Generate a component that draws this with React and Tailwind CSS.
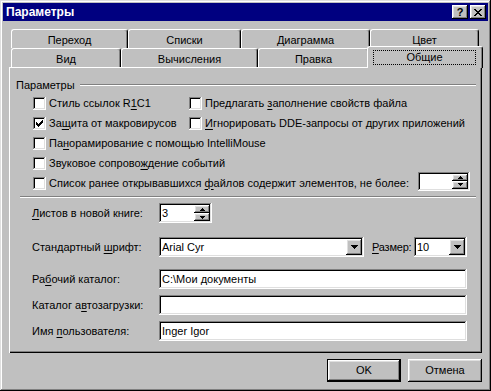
import React from "react";

const raised =
  "shadow-[inset_-1px_-1px_#000,inset_1px_1px_#fff,inset_-2px_-2px_#808080,inset_2px_2px_#dfdfdf]";
const sunken =
  "shadow-[inset_-1px_-1px_#fff,inset_1px_1px_#808080,inset_-2px_-2px_#dfdfdf,inset_2px_2px_#000]";

function U({ children }) {
  return <span className="underline underline-offset-[2px]">{children}</span>;
}

function Check({ checked }) {
  return (
    <div className={`w-[13px] h-[13px] bg-white shrink-0 flex items-center justify-center ${sunken}`}>
      {checked && (
        <svg width="7" height="7" viewBox="0 0 7 7" shapeRendering="crispEdges">
          <path d="M6 0h1v1h-1z M5 1h2v1h-2z M0 2h1v1h-1z M4 2h3v1h-3z M0 3h2v1h-2z M3 3h3v1h-3z M0 4h5v1h-5z M1 5h3v1h-3z M2 6h1v1h-1z" />
        </svg>
      )}
    </div>
  );
}

function CheckItem({ checked, children, className = "" }) {
  return (
    <div className={`flex items-center ${className}`}>
      <Check checked={checked} />
      <span className="ml-[3px] whitespace-nowrap">{children}</span>
    </div>
  );
}

function Arrow({ dir }) {
  return (
    <svg width="5" height="3" viewBox="0 0 5 3" shapeRendering="crispEdges">
      {dir === "up" ? (
        <path d="M2 0h1v1h-1z M1 1h3v1h-3z M0 2h5v1h-5z" />
      ) : (
        <path d="M0 0h5v1h-5z M1 1h3v1h-3z M2 2h1v1h-1z" />
      )}
    </svg>
  );
}

function Spin({ value, className = "" }) {
  return (
    <div className={`flex bg-white p-[2px] ${sunken} ${className}`}>
      <div className="flex-1 pl-[1px] flex items-center">{value}</div>
      <div className="w-[16px] flex flex-col">
        <div className={`flex-1 bg-[#c0c0c0] flex items-center justify-center ${raised}`}>
          <Arrow dir="up" />
        </div>
        <div className={`flex-1 bg-[#c0c0c0] flex items-center justify-center ${raised}`}>
          <Arrow dir="down" />
        </div>
      </div>
    </div>
  );
}

function Combo({ value, className = "" }) {
  return (
    <div className={`flex h-[20px] bg-white p-[2px] ${sunken} ${className}`}>
      <div className="flex-1 pl-[1px] flex items-center whitespace-nowrap">{value}</div>
      <div className={`w-[16px] h-[16px] bg-[#c0c0c0] flex items-center justify-center ${raised}`}>
        <svg width="7" height="4" viewBox="0 0 7 4" shapeRendering="crispEdges">
          <path d="M0 0h7v1h-7z M1 1h5v1h-5z M2 2h3v1h-3z M3 3h1v1h-1z" />
        </svg>
      </div>
    </div>
  );
}

function Field({ value = "", className = "" }) {
  return (
    <div className={`flex items-center h-[20px] bg-white px-[3px] ${sunken} ${className}`}>
      {value}
    </div>
  );
}

function Tab({ className = "", children }) {
  return (
    <div
      className={`h-[19px] flex items-center justify-center pt-[2px] bg-[#c0c0c0] border-l border-t border-r border-l-white border-t-white border-r-black rounded-tl-[3px] rounded-tr-[3px] shadow-[inset_-1px_0_#808080] ${className}`}
    >
      {children}
    </div>
  );
}

function Label({ children, className = "" }) {
  return <div className={`w-[127px] shrink-0 whitespace-nowrap ${className}`}>{children}</div>;
}

export default function App() {
  return (
    <div
      className={`w-[491px] h-[391px] bg-[#c0c0c0] text-black text-[11px] leading-[13px] font-['Liberation_Sans',Arial,sans-serif] shadow-[inset_-1px_-1px_#000,inset_1px_1px_#dfdfdf,inset_-2px_-2px_#808080,inset_2px_2px_#fff] pt-[3px] overflow-hidden`}
    >
      {/* title bar */}
      <div className="mx-[3px] h-[18px] bg-[#000080] flex items-center justify-between pl-[3px] pr-[2px]">
        <span className="text-white font-bold text-[12px]">Параметры</span>
        <div className="flex gap-[2px]">
          <div className={`w-[16px] h-[14px] bg-[#c0c0c0] flex items-center justify-center font-bold text-[11px] leading-none ${raised}`}>
            ?
          </div>
          <div className={`w-[16px] h-[14px] bg-[#c0c0c0] flex items-center justify-center ${raised}`}>
            <svg width="8" height="7" viewBox="0 0 8 7" shapeRendering="crispEdges">
              <path d="M0 0h2v1h-2z M6 0h2v1h-2z M1 1h2v1h-2z M5 1h2v1h-2z M2 2h4v1h-4z M3 3h2v1h-2z M2 4h4v1h-4z M1 5h2v1h-2z M5 5h2v1h-2z M0 6h2v1h-2z M6 6h2v1h-2z" />
            </svg>
          </div>
        </div>
      </div>

      <div className="mx-[9px] mt-[8px]">
        {/* tabs */}
        <div className="flex h-[19px] pl-[2px]">
          <Tab className="w-[117px]">Переход</Tab>
          <Tab className="w-[113px]">Списки</Tab>
          <Tab className="w-[129px]">Диаграмма</Tab>
          <Tab className="w-[109px]">Цвет</Tab>
        </div>
        <div className="flex h-[19px] pl-[2px] items-end">
          <Tab className="w-[110px]">Вид</Tab>
          <Tab className="w-[137px]">Вычисления</Tab>
          <Tab className="w-[111px]">Правка</Tab>
          <div className="relative z-10 -mx-[2px] w-[116px] h-[22px] translate-y-[1px] bg-[#c0c0c0] border-l border-t border-r border-l-white border-t-white border-r-black rounded-tl-[3px] rounded-tr-[3px] shadow-[inset_-1px_0_#808080] pt-[3px] pb-[3px] pl-[5px] pr-[6px]">
            <div className="h-full border border-dotted border-black flex items-center justify-center">
              Общие
            </div>
          </div>
        </div>

        {/* panel */}
        <div className="h-[286px] shadow-[inset_1px_1px_#fff,inset_-1px_-1px_#000,inset_-2px_-2px_#808080] flex flex-col">
          <div className="flex items-center mt-[11px] h-[14px] pl-[7px] pr-[6px]">
            <span>Параметры</span>
            <div className="flex-1 ml-[5px] h-[2px] border-t border-t-[#808080] border-b border-b-white" />
          </div>

          <div className="mt-[1px] pl-[24px] flex flex-col">
            <div className="flex h-[20px] items-center">
              <CheckItem className="w-[156px]">
                Стиль ссылок R<U>1</U>C1
              </CheckItem>
              <CheckItem>
                Предлагать <U>з</U>аполнение свойств файла
              </CheckItem>
            </div>
            <div className="flex h-[20px] items-center">
              <CheckItem checked className="w-[156px]">
                За<U>щ</U>ита от макровирусов
              </CheckItem>
              <CheckItem>
                <U>И</U>гнорировать DDE-запросы от других приложений
              </CheckItem>
            </div>
            <div className="flex h-[20px] items-center">
              <CheckItem>
                Па<U>н</U>орамирование с помощью IntelliMouse
              </CheckItem>
            </div>
            <div className="flex h-[20px] items-center">
              <CheckItem>
                Звуковое сопрово<U>ж</U>дение событий
              </CheckItem>
            </div>
            <div className="flex h-[20px] items-center">
              <CheckItem>
                Список ранее открывавшихся <U>ф</U>айлов содержит элементов, не более:
              </CheckItem>
              <Spin className="ml-auto mr-[12px] w-[52px] h-[19px] -mt-[4px]" />
            </div>
          </div>

          <div className="mt-[3px] ml-[11px] mr-[6px] h-[2px] border-t border-t-[#808080] border-b border-b-white" />

          <div className="pl-[23px] flex flex-col">
            <div className="flex items-center mt-[5px]">
              <Label>
                <U>Л</U>истов в новой книге:
              </Label>
              <Spin value="3" className="w-[53px] h-[20px]" />
            </div>
            <div className="flex items-center mt-[14px]">
              <Label>
                Стандартный <U>ш</U>рифт:
              </Label>
              <Combo value="Arial Cyr" className="w-[205px]" />
              <div className="ml-[8px] w-[42px] whitespace-nowrap tracking-[-0.2px]">
                <U>Р</U>азмер:
              </div>
              <Combo value="10" className="w-[53px]" />
            </div>
            <div className="flex items-center mt-[12px]">
              <Label>
                Ра<U>б</U>очий каталог:
              </Label>
              <Field value="C:\Мои документы" className="w-[308px]" />
            </div>
            <div className="flex items-center mt-[6px]">
              <Label>
                Каталог а<U>в</U>тозагрузки:
              </Label>
              <Field className="w-[308px]" />
            </div>
            <div className="flex items-center mt-[6px]">
              <Label>
                Имя <U>п</U>ользователя:
              </Label>
              <Field value="Inger Igor" className="w-[308px]" />
            </div>
          </div>
        </div>

        {/* buttons */}
        <div className="mt-[6px] flex justify-end gap-[7px]">
          <div className="w-[74px] h-[23px] border border-black">
            <div className={`w-full h-full flex items-center justify-center ${raised}`}>OK</div>
          </div>
          <div className={`w-[74px] h-[23px] flex items-center justify-center ${raised}`}>Отмена</div>
        </div>
      </div>
    </div>
  );
}
